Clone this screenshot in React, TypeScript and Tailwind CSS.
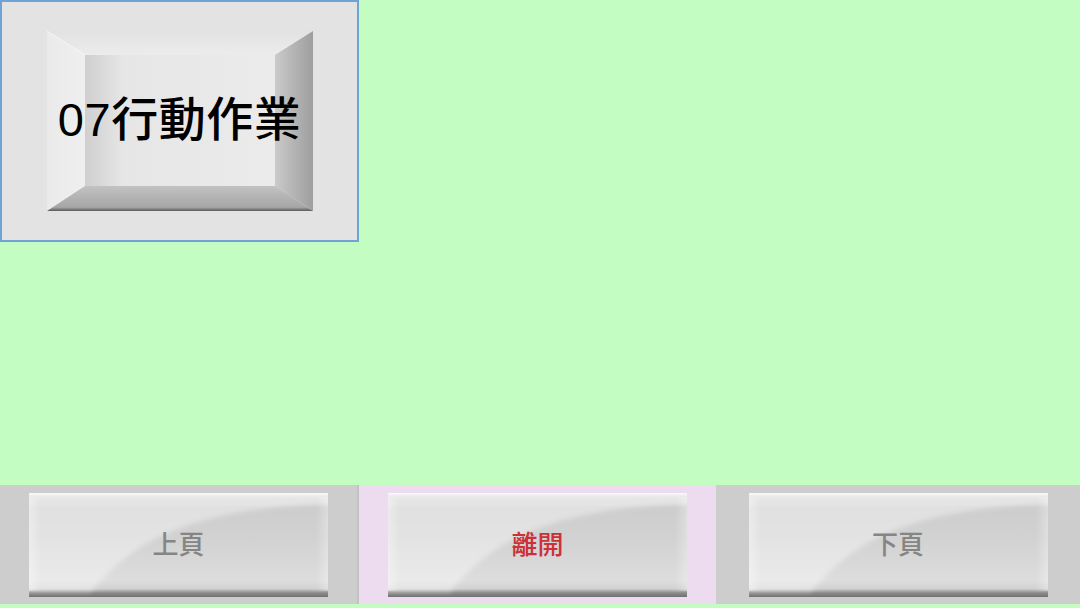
const cjk = { fontFamily: '"Liberation Sans", "Noto Sans CJK TC", sans-serif' };

function BevelTile({ label }: { label: string }) {
  return (
    <div className="relative w-[359px] h-[242px] border-2 border-[#6fa3d6] bg-[#e3e3e3]">
      <svg className="absolute inset-0" width="355" height="238" viewBox="0 0 355 238">
        <defs>
          <linearGradient id="face" x1="0" y1="0" x2="1" y2="0">
            <stop offset="0" stopColor="#cfcfcf" />
            <stop offset="0.2" stopColor="#e6e6e6" />
            <stop offset="1" stopColor="#ebebeb" />
          </linearGradient>
          <linearGradient id="top" x1="0" y1="0" x2="0" y2="1">
            <stop offset="0" stopColor="#e2e2e2" />
            <stop offset="1" stopColor="#ececec" />
          </linearGradient>
          <linearGradient id="left" x1="0" y1="0" x2="1" y2="0">
            <stop offset="0" stopColor="#eaeaea" />
            <stop offset="1" stopColor="#efefef" />
          </linearGradient>
          <linearGradient id="right" x1="0" y1="0" x2="1" y2="0">
            <stop offset="0" stopColor="#cacaca" />
            <stop offset="1" stopColor="#9e9e9e" />
          </linearGradient>
          <linearGradient id="bottom" x1="0" y1="0" x2="0" y2="1">
            <stop offset="0" stopColor="#c2c2c2" />
            <stop offset="0.85" stopColor="#a6a6a6" />
            <stop offset="1" stopColor="#5a5a5a" />
          </linearGradient>
        </defs>
        <polygon points="45,29 311,29 273,53 83,53" fill="url(#top)" />
        <polygon points="45,29 83,53 83,184 45,209" fill="url(#left)" />
        <polygon points="311,29 311,209 273,184 273,53" fill="url(#right)" />
        <polygon points="83,184 273,184 311,209 45,209" fill="url(#bottom)" />
        <rect x="83" y="53" width="190" height="131" fill="url(#face)" />
        <line x1="45" y1="29" x2="83" y2="53" stroke="#f6f6f6" strokeWidth="1" />
      </svg>
      <div className="relative flex h-full items-center justify-center pb-[2px] text-[47px] font-medium tracking-[0.5px] text-black" style={cjk}>
        {label}
      </div>
    </div>
  );
}

function GlossButton({ label, color }: { label: string; color: string }) {
  return (
    <button className="relative w-[299px] h-[104px] overflow-hidden bg-[linear-gradient(to_bottom,#fbfbfb_0%,#ebebeb_3%,#cdcdcd_14%,#d2d2d2_45%,#dddddd_84%,#d2d2d2_92%,#8c8c8c_96%,#707070_100%)]">
      <svg className="absolute inset-0" width="299" height="104" viewBox="0 0 299 104" preserveAspectRatio="none">
        <defs>
          <filter id="soft" x="-10%" y="-10%" width="120%" height="120%">
            <feGaussianBlur stdDeviation="2.5" />
          </filter>
          <linearGradient id="edge" x1="0" y1="0" x2="1" y2="0">
            <stop offset="0" stopColor="#ffffff" stopOpacity="0.35" />
            <stop offset="0.04" stopColor="#ffffff" stopOpacity="0" />
            <stop offset="0.96" stopColor="#ffffff" stopOpacity="0" />
            <stop offset="1" stopColor="#ffffff" stopOpacity="0.3" />
          </linearGradient>
        </defs>
        <path d="M-10 8 L-10 99 L62 99 C 100 55, 145 16, 310 10 L310 8 Z" fill="#ffffff" fillOpacity="0.38" filter="url(#soft)" />
        <rect x="0" y="4" width="299" height="94" fill="url(#edge)" />
      </svg>
      <span className={`relative text-[26px] font-medium ${color}`} style={cjk}>
        {label}
      </span>
    </button>
  );
}

export default function App() {
  return (
    <div className="flex h-[608px] w-[1080px] flex-col bg-[#c4fdc1]">
      <div className="flex-1">
        <BevelTile label="07行動作業" />
      </div>
      <div className="mb-[4px] flex h-[119px]">
        <div className="flex w-[359px] justify-center border-r-2 border-[#c2c2c2] bg-[#cdcdcd] pt-[8px]">
          <GlossButton label="上頁" color="text-[#858585]" />
        </div>
        <div className="flex w-[357px] justify-center bg-[#eddbef] pt-[8px]">
          <GlossButton label="離開" color="text-[#cc3038]" />
        </div>
        <div className="flex flex-1 justify-center bg-[#cdcdcd] pt-[8px]">
          <GlossButton label="下頁" color="text-[#858585]" />
        </div>
      </div>
    </div>
  );
}
